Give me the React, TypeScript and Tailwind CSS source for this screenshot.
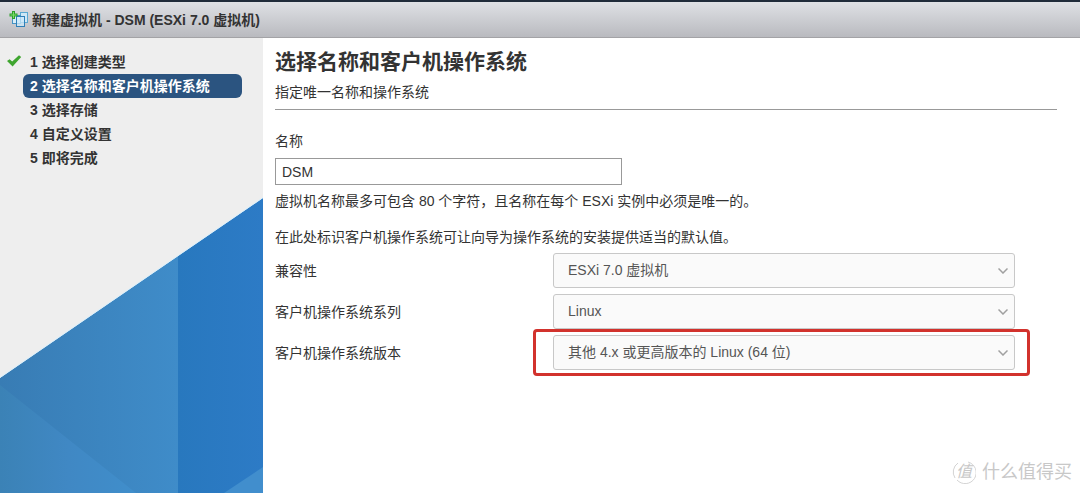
import React, { useState } from "react";

const steps = ["选择创建类型", "选择名称和客户机操作系统", "选择存储", "自定义设置", "即将完成"];

const VmIcon = () => (
  <svg width="20" height="18" viewBox="0 0 20 18" fill="none" className="shrink-0">
    <rect x="11.5" y="1.5" width="7" height="10" fill="#cfe8f6" stroke="#5aa9d2" />
    <rect x="3.500" y="4.5" width="8" height="8" fill="#d9eef9" stroke="#4593c4" />
    <rect x="7.5" y="5.5" width="8" height="10" fill="#cdeafa" fillOpacity="0.75" stroke="#2f80b8" />
    <path d="M4.500 0v8M0.500 4h8" stroke="#2fa02c" strokeWidth="3" />
    <path d="M4.500 1v6M1.500 4h6" stroke="#7ddc68" strokeWidth="1" />
  </svg>
);

const CheckIcon = () => (
  <svg width="15" height="12" viewBox="0 0 15 12" className="mb-[3px] shrink-0">
    <path d="M0 6L2.600 4.200L5.200 6.600L12 0.200L14.200 2L5.600 11.400Z" fill="#3fa52f" />
  </svg>
);

const SidebarArt = () => (
  <svg viewBox="0 0 263 296" className="mt-auto block w-full">
    <defs>
      <linearGradient id="left" x1="0" y1="0" x2="1" y2="0">
        <stop offset="0" stopColor="#387cb4" />
        <stop offset="1" stopColor="#3f8cc9" />
      </linearGradient>
      <linearGradient id="right" x1="0" y1="0" x2="1" y2="0">
        <stop offset="0" stopColor="#2878be" />
        <stop offset="1" stopColor="#2d7bc6" />
      </linearGradient>
      <linearGradient id="corner" x1="0" y1="0" x2="1" y2="0">
        <stop offset="0" stopColor="#3b82b6" />
        <stop offset="0.5" stopColor="#4088c4" />
        <stop offset="1" stopColor="#408ecb" />
      </linearGradient>
    </defs>
    <path d="M0 181L178 59V296H0Z" fill="url(#left)" />
    <path d="M178 59L263 1V296H178Z" fill="url(#right)" />
    <path d="M0 188L136 296H0Z" fill="url(#corner)" />
    <path d="M224 296L263 270V296Z" fill="#418ecd" />
    <path d="M0 180.500L263 0.500" stroke="#d9effb" />
  </svg>
);

const WatermarkLogo = () => (
  <span className="relative flex h-6 w-6 items-center justify-center text-base italic">
    <svg viewBox="0 0 24 24" className="absolute inset-0" fill="none" stroke="#d4d4d4">
      <path d="M6 3A11 11 0 0 0 3 18M5 20A11 11 0 1 0 16 2" />
    </svg>
    值
  </span>
);

type SelectRowProps = {
  id: string;
  label: string;
  options: string[];
  highlighted?: boolean;
};

const SelectRow = ({ id, label, options, highlighted }: SelectRowProps) => (
  <div className="grid grid-cols-[278px_1fr] items-center">
    <label htmlFor={id}>{label}</label>
    <div className="relative">
      <select
        id={id}
        className="block h-[35px] w-full appearance-none rounded-[3px] border border-[#c8c8c8] bg-[#fafafa] pr-8 pb-[2px] pl-[14px] text-[#555]"
      >
        {options.map((option) => (
          <option key={option}>{option}</option>
        ))}
      </select>
      <svg
        viewBox="0 0 10 6"
        className="pointer-events-none absolute top-[15px] right-[7px] h-[6px] w-[10px]"
        fill="none"
        stroke="#a0a0a0"
        strokeWidth="1.5"
      >
        <path d="M0.500 0.500L5 5L9.500 0.500" />
      </svg>
      {highlighted && (
        <div className="pointer-events-none absolute -top-[6px] -right-[15px] -bottom-[6px] -left-[20px] rounded-[4px] border-[3px] border-[#d2322d]" />
      )}
    </div>
  </div>
);

const App = () => {
  const [name, setName] = useState<string>("DSM");

  return (
    <div className="relative flex min-h-screen flex-col bg-white font-['Liberation_Sans','Noto_Sans_CJK_SC',sans-serif] text-sm text-[#333]">
      <header className="flex h-[38px] items-center gap-[3px] border-t-2 border-b border-t-[#202c3a] border-b-[#a3a3a6] bg-linear-to-b from-[#dfe1e5] to-[#b9babf] pl-[9px]">
        <VmIcon />
        <h1 className="font-bold">新建虚拟机 - DSM (ESXi 7.0 虚拟机)</h1>
      </header>

      <div className="flex grow">
        <nav className="flex w-[263px] shrink-0 flex-col bg-[#eee] pt-3">
          <ol className="font-bold">
            {steps.map((step, i) => (
              <li key={step} className="flex h-6 items-center pr-[21px] pl-[7px]">
                <span className="w-4">{i === 0 && <CheckIcon />}</span>
                <a
                  href="#"
                  className={
                    i === 1
                      ? "flex h-6 grow items-center rounded-md bg-[#2b5480] pl-[7px] text-white"
                      : "flex h-6 grow items-center pl-[7px]"
                  }
                >
                  {i + 1} {step}
                </a>
              </li>
            ))}
          </ol>
          <SidebarArt />
        </nav>

        <main className="grow pt-2 pr-[23px] pl-3">
          <h2 className="text-[21px] leading-8 font-bold">选择名称和客户机操作系统</h2>
          <p className="border-b border-[#999] pt-1 pb-[7px]">指定唯一名称和操作系统</p>

          <form className="pt-[21px]">
            <label htmlFor="name" className="block">
              名称
            </label>
            <input
              id="name"
              value={name}
              onChange={(e) => setName(e.target.value)}
              className="mt-[7px] block h-[27px] w-[347px] border border-[#999] px-[6px]"
            />
            <p className="mt-[6px]">虚拟机名称最多可包含 80 个字符，且名称在每个 ESXi 实例中必须是唯一的。</p>
            <p className="mt-4">在此处标识客户机操作系统可让向导为操作系统的安装提供适当的默认值。</p>

            <div className="mt-[6px] flex flex-col gap-[6px] pr-[42px]">
              <SelectRow id="compat" label="兼容性" options={["ESXi 7.0 虚拟机"]} />
              <SelectRow id="family" label="客户机操作系统系列" options={["Linux"]} />
              <SelectRow
                id="version"
                label="客户机操作系统版本"
                options={["其他 4.x 或更高版本的 Linux (64 位)"]}
                highlighted
              />
            </div>
          </form>
        </main>
      </div>

      <div className="absolute right-2 bottom-[9px] flex items-center gap-[6px] text-lg leading-6 text-[#c8c8c8]">
        <WatermarkLogo />
        <span>什么值得买</span>
      </div>
    </div>
  );
};

export default App;
